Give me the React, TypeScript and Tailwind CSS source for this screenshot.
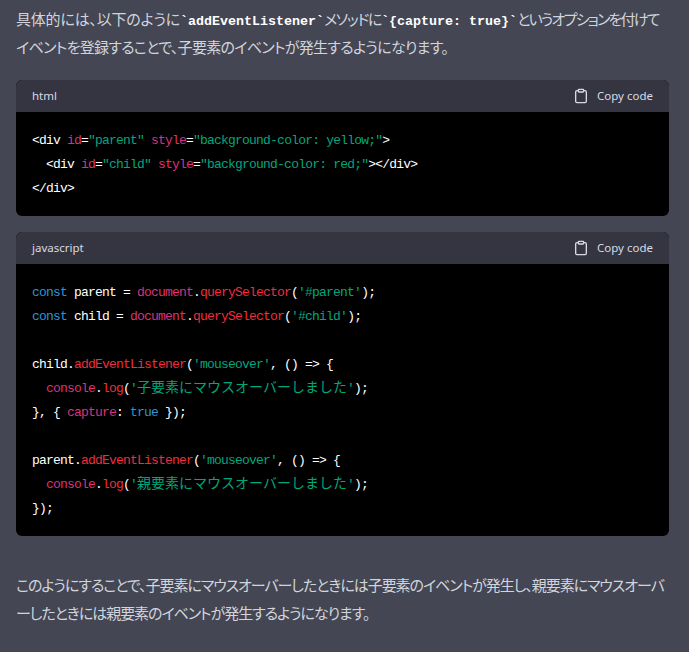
import React from "react";

type Token = [string, string?];

const BLUE = "text-[#2e95d3]";
const PINK = "text-[#df3079]";
const RED = "text-[#f22c3d]";
const GREEN = "text-[#00a67d]";

const htmlLines: Token[][] = [
  [["<div "], ["id", PINK], ["="], ['"parent"', GREEN], [" "], ["style", PINK], ["="], ['"background-color: yellow;"', GREEN], [">"]],
  [["  <div "], ["id", PINK], ["="], ['"child"', GREEN], [" "], ["style", PINK], ["="], ['"background-color: red;"', GREEN], ["></div>"]],
  [["</div>"]],
];

const jsLines: Token[][] = [
  [["const", BLUE], [" parent = "], ["document", PINK], ["."], ["querySelector", RED], ["("], ["'#parent'", GREEN], [");"]],
  [["const", BLUE], [" child = "], ["document", PINK], ["."], ["querySelector", RED], ["("], ["'#child'", GREEN], [");"]],
  [],
  [["child."], ["addEventListener", RED], ["("], ["'mouseover'", GREEN], [", () => {"]],
  [["  "], ["console", PINK], ["."], ["log", RED], ["("], ["'", GREEN], ["子要素にマウスオーバーしました", GREEN], ["'", GREEN], [");"]],
  [["}, { "], ["capture", PINK], [": "], ["true", BLUE], [" });"]],
  [],
  [["parent."], ["addEventListener", RED], ["("], ["'mouseover'", GREEN], [", () => {"]],
  [["  "], ["console", PINK], ["."], ["log", RED], ["("], ["'", GREEN], ["親要素にマウスオーバーしました", GREEN], ["'", GREEN], [");"]],
  [["});"]],
];

const isCjk = (s: string) => /[\u3040-\u30ff\u4e00-\u9fff]/.test(s);

const ClipboardIcon = () => (
  <svg width="16" height="16" viewBox="0 0 24 24" fill="none" stroke="currentColor" strokeWidth="2" strokeLinecap="round" strokeLinejoin="round">
    <path d="M16 4h2a2 2 0 0 1 2 2v14a2 2 0 0 1-2 2H6a2 2 0 0 1-2-2V6a2 2 0 0 1 2-2h2" />
    <rect x="8" y="2" width="8" height="4" rx="1" />
  </svg>
);

const CodeBlock = ({ lang, lines }: { lang: string; lines: Token[][] }) => (
  <div className="rounded-md overflow-hidden bg-black">
    <div className="h-8 px-4 flex items-center justify-between bg-[#343541] text-[#d9d9e3] text-[11.5px] font-['Noto_Sans',sans-serif]">
      <span>{lang}</span>
      <span className="flex items-center gap-2">
        <ClipboardIcon />
        <span>Copy code</span>
      </span>
    </div>
    <div className="px-4 pt-[17px] pb-[15px] text-white text-[13px] leading-6 whitespace-pre font-['Liberation_Mono',monospace]">
      {lines.map((line, i) => (
        <div key={i} className="h-6">
          {line.map(([text, color], j) =>
            isCjk(text) ? (
              <span key={j} className={`${color} text-[14px] leading-none font-['Noto_Sans_CJK_JP',sans-serif]`}>
                {text}
              </span>
            ) : (
              <span key={j} className={`${color ?? ""} tracking-[-0.8px]`}>
                {text}
              </span>
            )
          )}
        </div>
      ))}
    </div>
  </div>
);

const InlineCode = ({ children }: { children: string }) => (
  <code className="font-['Liberation_Mono',monospace] text-[13.33px] leading-none font-bold tracking-normal text-white">{children}</code>
);

export default function App() {
  return (
    <div className="w-[689px] h-[652px] overflow-hidden bg-[#444654] pl-4 pr-5 pt-[5px] text-[#d1d5db] text-[15px] leading-7 tracking-[-0.7px] font-['Noto_Sans_CJK_JP',sans-serif] [font-feature-settings:'palt']">
      <p className="h-14 whitespace-nowrap">
        <span className="tracking-[-0.2px]">具体的には、以下のように</span>
        <InlineCode>`addEventListener`</InlineCode>
        <span className="tracking-[-1.3px]">メソッドに</span>
        <InlineCode>{"`{capture: true}`"}</InlineCode>
        <span className="tracking-[-1.8px]">というオプションを付けて</span>
        <br />
        イベントを登録することで、子要素のイベントが発生するようになります。
      </p>
      <div className="mt-[19px] flex flex-col gap-4 tracking-normal [font-feature-settings:normal]">
        <CodeBlock lang="html" lines={htmlLines} />
        <CodeBlock lang="javascript" lines={jsLines} />
      </div>
      <p className="mt-[35px] h-14 whitespace-nowrap tracking-[-1.05px]">
        このようにすることで、子要素にマウスオーバーしたときには子要素のイベントが発生し、親要素にマウスオーバ
        <br />
        ーしたときには親要素のイベントが発生するようになります。
      </p>
    </div>
  );
}
